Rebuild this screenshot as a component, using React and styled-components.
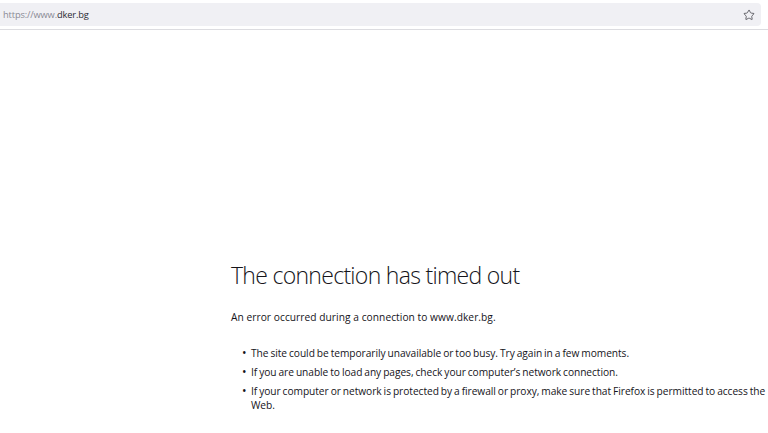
import React from 'react';
import styled, { createGlobalStyle } from 'styled-components';
import { Star } from 'lucide-react';

const GlobalStyle = createGlobalStyle`
  html, body {
    margin: 0;
    padding: 0;
    background: #ffffff;
  }
  body {
    font-family: "Open Sans", "Noto Sans", sans-serif;
    color: #15141a;
  }
`;

const Page = styled.div`
  width: 768px;
  height: 433px;
  overflow: hidden;
  background: #ffffff;
`;

const Toolbar = styled.div`
  height: 30px;
  padding: 3px 7px 0 0;
  box-sizing: border-box;
  border-bottom: 1px solid #dcdce0;
`;

const UrlBar = styled.div`
  height: 23px;
  background: #f0f0f4;
  border-radius: 0 4px 4px 0;
  display: flex;
  align-items: center;
  justify-content: space-between;
  padding: 0 6px 0 3px;
  font-size: 9.3px;
`;

const Url = styled.span`
  color: #8a8a94;
  letter-spacing: -0.15px;

  b {
    color: #2b2a33;
    font-weight: 400;
  }
`;

const StarButton = styled.span`
  display: flex;
  color: #3a3a40;
`;

const Content = styled.main`
  padding: 229px 0 0 231px;
`;

const Title = styled.h1`
  margin: 0;
  font-size: 23px;
  font-weight: 300;
  line-height: 32px;
  letter-spacing: -0.7px;
  color: #15141a;
`;

const Lead = styled.p`
  margin: 19px 0 0;
  font-size: 10.2px;
  line-height: 14px;
  letter-spacing: 0.05px;
  color: #15141a;
`;

const Hints = styled.ul`
  margin: 22px 0 0;
  padding: 0 0 0 20px;
  list-style: none;
  font-size: 10.2px;
  line-height: 14px;
  letter-spacing: -0.05px;
  word-spacing: -0.6px;
  color: #15141a;

  li::before {
    content: '•';
    display: inline-block;
    width: 9px;
    margin-left: -9px;
    font-size: 12px;
    line-height: 14px;
    vertical-align: top;
  }

  li + li {
    margin-top: 5px;
  }
`;

export default function App() {
  return (
    <Page>
      <GlobalStyle />
      <Toolbar>
        <UrlBar>
          <Url>https://www.<b>dker.bg</b></Url>
          <StarButton>
            <Star size={12} strokeWidth={1.5} />
          </StarButton>
        </UrlBar>
      </Toolbar>
      <Content>
        <Title>The connection has timed out</Title>
        <Lead>An error occurred during a connection to www.dker.bg.</Lead>
        <Hints>
          <li>The site could be temporarily unavailable or too busy. Try again in a few moments.</li>
          <li>If you are unable to load any pages, check your computer’s network connection.</li>
          <li>If your computer or network is protected by a firewall or proxy, make sure that Firefox is permitted to access the Web.</li>
        </Hints>
      </Content>
    </Page>
  );
}
